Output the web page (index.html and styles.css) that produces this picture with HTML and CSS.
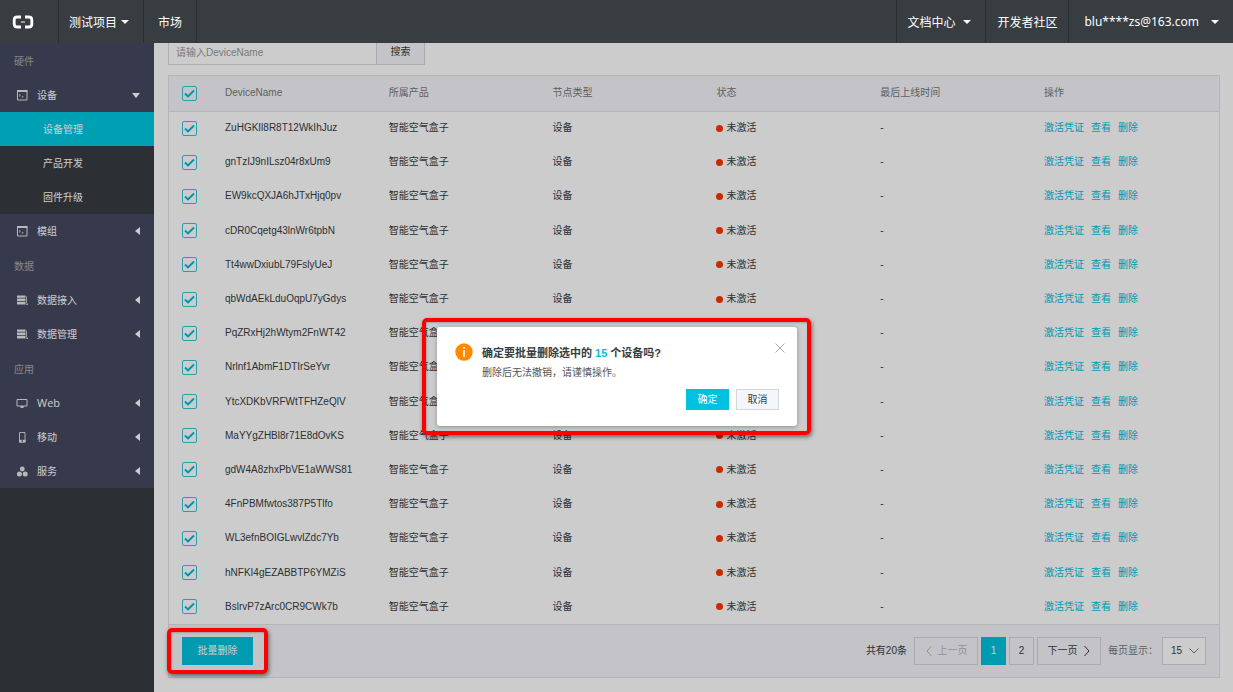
FILE: index.html
```html
<!DOCTYPE html>
<html lang="zh-CN">
<head>
    <meta charset="UTF-8">
    <meta name="viewport" content="width=device-width, initial-scale=1.0">
    <title>设备管理</title>
    <link rel="stylesheet" href="styles.css">
</head>
<body>
    <!-- shared icons -->
    <svg class="sprite" aria-hidden="true">
        <symbol id="icon-window" viewBox="0 0 12 12"><path d="M1.500 1.500h9.500v9.500H1.500z" fill="none" stroke="currentColor"/><path d="M1 1h10.500v2H1z" fill="currentColor"/><path d="M3 5l1.500 1.200L3 7.400M5.500 7.800h2" fill="none" stroke="currentColor" stroke-width=".8"/></symbol>
        <symbol id="icon-data" viewBox="0 0 12 12"><path d="M1 1.500h8.500v2.300H1zM1 4.600h8.500v2.300H1zM1 7.700h8.500v2.800H1zM10 2.500h.8V9H10zM10.300 9.500h1.500V11h-1.500z" fill="currentColor"/></symbol>
        <symbol id="icon-web" viewBox="0 0 12 12"><path d="M1 2.500h10v6.500H1z" fill="none" stroke="currentColor"/><path d="M4.500 9h3v2h-3z" fill="currentColor"/></symbol>
        <symbol id="icon-phone" viewBox="0 0 12 12"><path d="M3.500 1.500h5.500v9.500H3.500z" fill="none" stroke="currentColor" stroke-width=".9"/><path d="M3 8.800h6.500v2.700H3z" fill="currentColor"/><circle cx="6.200" cy="10" r=".8" fill="#353a49"/></symbol>
        <symbol id="icon-service" viewBox="0 0 12 12"><g fill="currentColor"><circle cx="6.300" cy="4" r="2.400"/><circle cx="3.400" cy="9" r="2.500"/><circle cx="9.200" cy="9" r="2.500"/></g></symbol>
    </svg>

    <header class="topbar">
        <a class="logo" href="#" aria-label="首页">
            <svg width="22" height="14" viewBox="0 0 22 14" fill="none" stroke="#fff"><path d="M9 2H5.500Q2.200 2 2.200 4.800v4.400Q2.200 12 5.500 12H9M13 2h3.500q3.300 0 3.300 2.800v4.400q0 2.800-3.300 2.800H13" stroke-width="2.800"/><path d="M9 7h4" stroke-width="1"/></svg>
        </a>
        <a class="nav-item" href="#">测试项目<span class="caret"></span></a>
        <a class="nav-item" href="#">市场</a>
        <div class="topbar-right">
            <a class="nav-item" href="#">文档中心<span class="caret caret-wide"></span></a>
            <a class="nav-item" href="#">开发者社区</a>
            <a class="nav-item nav-user" href="#">blu****zs@163.com<span class="caret caret-user"></span></a>
        </div>
    </header>

    <div class="layout">
        <nav class="sidebar">
            <div class="menu">
                <div class="menu-title">硬件</div>
                <a class="menu-item" href="#"><svg class="icon"><use href="#icon-window"/></svg>设备<span class="arrow arrow-down"></span></a>
                <div class="submenu">
                    <a class="submenu-item active" href="#">设备管理</a>
                    <a class="submenu-item" href="#">产品开发</a>
                    <a class="submenu-item" href="#">固件升级</a>
                </div>
                <a class="menu-item" href="#"><svg class="icon"><use href="#icon-window"/></svg>模组<span class="arrow"></span></a>
                <div class="menu-title">数据</div>
                <a class="menu-item" href="#"><svg class="icon"><use href="#icon-data"/></svg>数据接入<span class="arrow"></span></a>
                <a class="menu-item" href="#"><svg class="icon"><use href="#icon-data"/></svg>数据管理<span class="arrow"></span></a>
                <div class="menu-title">应用</div>
                <a class="menu-item" href="#"><svg class="icon"><use href="#icon-web"/></svg><span class="latin">Web</span><span class="arrow"></span></a>
                <a class="menu-item" href="#"><svg class="icon"><use href="#icon-phone"/></svg>移动<span class="arrow"></span></a>
                <a class="menu-item" href="#"><svg class="icon"><use href="#icon-service"/></svg>服务<span class="arrow"></span></a>
            </div>
        </nav>

        <main class="content">
            <form class="search">
                <input class="search-input" type="text" placeholder="请输入DeviceName" aria-label="DeviceName">
                <button class="search-btn" type="button">搜索</button>
            </form>

            <div class="panel">
                <table class="devices">
                    <thead>
                        <tr><th class="col-check"><input type="checkbox" aria-label="全选" checked></th><th>DeviceName</th><th>所属产品</th><th>节点类型</th><th>状态</th><th>最后上线时间</th><th class="col-action">操作</th></tr>
                    </thead>
                    <tbody>
                        <tr><td><input type="checkbox" aria-label="ZuHGKIl8R8T12WkIhJuz" checked></td><td>ZuHGKIl8R8T12WkIhJuz</td><td>智能空气盒子</td><td>设备</td><td><span class="status">未激活</span></td><td>-</td><td><div class="actions"><a href="#">激活凭证</a><a href="#">查看</a><a href="#">删除</a></div></td></tr>
                        <tr><td><input type="checkbox" aria-label="gnTzIJ9nILsz04r8xUm9" checked></td><td>gnTzIJ9nILsz04r8xUm9</td><td>智能空气盒子</td><td>设备</td><td><span class="status">未激活</span></td><td>-</td><td><div class="actions"><a href="#">激活凭证</a><a href="#">查看</a><a href="#">删除</a></div></td></tr>
                        <tr><td><input type="checkbox" aria-label="EW9kcQXJA6hJTxHjq0pv" checked></td><td>EW9kcQXJA6hJTxHjq0pv</td><td>智能空气盒子</td><td>设备</td><td><span class="status">未激活</span></td><td>-</td><td><div class="actions"><a href="#">激活凭证</a><a href="#">查看</a><a href="#">删除</a></div></td></tr>
                        <tr><td><input type="checkbox" aria-label="cDR0Cqetg43lnWr6tpbN" checked></td><td>cDR0Cqetg43lnWr6tpbN</td><td>智能空气盒子</td><td>设备</td><td><span class="status">未激活</span></td><td>-</td><td><div class="actions"><a href="#">激活凭证</a><a href="#">查看</a><a href="#">删除</a></div></td></tr>
                        <tr><td><input type="checkbox" aria-label="Tt4wwDxiubL79FslyUeJ" checked></td><td>Tt4wwDxiubL79FslyUeJ</td><td>智能空气盒子</td><td>设备</td><td><span class="status">未激活</span></td><td>-</td><td><div class="actions"><a href="#">激活凭证</a><a href="#">查看</a><a href="#">删除</a></div></td></tr>
                        <tr><td><input type="checkbox" aria-label="qbWdAEkLduOqpU7yGdys" checked></td><td>qbWdAEkLduOqpU7yGdys</td><td>智能空气盒子</td><td>设备</td><td><span class="status">未激活</span></td><td>-</td><td><div class="actions"><a href="#">激活凭证</a><a href="#">查看</a><a href="#">删除</a></div></td></tr>
                        <tr><td><input type="checkbox" aria-label="PqZRxHj2hWtym2FnWT42" checked></td><td>PqZRxHj2hWtym2FnWT42</td><td>智能空气盒子</td><td>设备</td><td><span class="status">未激活</span></td><td>-</td><td><div class="actions"><a href="#">激活凭证</a><a href="#">查看</a><a href="#">删除</a></div></td></tr>
                        <tr><td><input type="checkbox" aria-label="Nrlnf1AbmF1DTIrSeYvr" checked></td><td>Nrlnf1AbmF1DTIrSeYvr</td><td>智能空气盒子</td><td>设备</td><td><span class="status">未激活</span></td><td>-</td><td><div class="actions"><a href="#">激活凭证</a><a href="#">查看</a><a href="#">删除</a></div></td></tr>
                        <tr><td><input type="checkbox" aria-label="YtcXDKbVRFWtTFHZeQlV" checked></td><td>YtcXDKbVRFWtTFHZeQlV</td><td>智能空气盒子</td><td>设备</td><td><span class="status">未激活</span></td><td>-</td><td><div class="actions"><a href="#">激活凭证</a><a href="#">查看</a><a href="#">删除</a></div></td></tr>
                        <tr><td><input type="checkbox" aria-label="MaYYgZHBl8r71E8dOvKS" checked></td><td>MaYYgZHBl8r71E8dOvKS</td><td>智能空气盒子</td><td>设备</td><td><span class="status">未激活</span></td><td>-</td><td><div class="actions"><a href="#">激活凭证</a><a href="#">查看</a><a href="#">删除</a></div></td></tr>
                        <tr><td><input type="checkbox" aria-label="gdW4A8zhxPbVE1aWWS81" checked></td><td>gdW4A8zhxPbVE1aWWS81</td><td>智能空气盒子</td><td>设备</td><td><span class="status">未激活</span></td><td>-</td><td><div class="actions"><a href="#">激活凭证</a><a href="#">查看</a><a href="#">删除</a></div></td></tr>
                        <tr><td><input type="checkbox" aria-label="4FnPBMfwtos387P5Tlfo" checked></td><td>4FnPBMfwtos387P5Tlfo</td><td>智能空气盒子</td><td>设备</td><td><span class="status">未激活</span></td><td>-</td><td><div class="actions"><a href="#">激活凭证</a><a href="#">查看</a><a href="#">删除</a></div></td></tr>
                        <tr><td><input type="checkbox" aria-label="WL3efnBOIGLwvlZdc7Yb" checked></td><td>WL3efnBOIGLwvlZdc7Yb</td><td>智能空气盒子</td><td>设备</td><td><span class="status">未激活</span></td><td>-</td><td><div class="actions"><a href="#">激活凭证</a><a href="#">查看</a><a href="#">删除</a></div></td></tr>
                        <tr><td><input type="checkbox" aria-label="hNFKI4gEZABBTP6YMZiS" checked></td><td>hNFKI4gEZABBTP6YMZiS</td><td>智能空气盒子</td><td>设备</td><td><span class="status">未激活</span></td><td>-</td><td><div class="actions"><a href="#">激活凭证</a><a href="#">查看</a><a href="#">删除</a></div></td></tr>
                        <tr><td><input type="checkbox" aria-label="BslrvP7zArc0CR9CWk7b" checked></td><td>BslrvP7zArc0CR9CWk7b</td><td>智能空气盒子</td><td>设备</td><td><span class="status">未激活</span></td><td>-</td><td><div class="actions"><a href="#">激活凭证</a><a href="#">查看</a><a href="#">删除</a></div></td></tr>
                    </tbody>
                </table>

                <div class="panel-footer">
                    <button class="batch-btn" type="button">批量删除</button>
                    <div class="pager">
                        <span class="total">共有20条</span>
                        <button class="page-btn page-step" type="button" disabled><svg width="8" height="12" viewBox="0 0 8 12"><path d="M6.500 1L2 6l4.500 5" fill="none" stroke="currentColor"/></svg>上一页</button>
                        <button class="page-btn current" type="button">1</button>
                        <button class="page-btn" type="button">2</button>
                        <button class="page-btn page-step" type="button">下一页<svg width="8" height="12" viewBox="0 0 8 12"><path d="M1.500 1L6 6l-4.500 5" fill="none" stroke="currentColor"/></svg></button>
                        <label class="size-label" for="pageSize">每页显示：</label>
                        <select class="page-size" id="pageSize"><option>15</option></select>
                    </div>
                </div>
            </div>
        </main>
    </div>

    <div class="mask">
        <div class="mark mark-dialog">
            <div class="dialog" role="dialog" aria-labelledby="dialogTitle">
                <svg class="dialog-icon" width="18" height="18" viewBox="0 0 18 18"><circle cx="9" cy="9" r="8.700" fill="#ff8a00"/><path d="M8.200 4h1.600v1.700H8.200zM8.200 7h1.600v7H8.200z" fill="#fff"/></svg>
                <div class="dialog-body">
                    <h3 id="dialogTitle">确定要批量删除选中的 <em>15</em> 个设备吗?</h3>
                    <p>删除后无法撤销，请谨慎操作。</p>
                    <div class="dialog-actions">
                        <button class="btn btn-primary" type="button">确定</button>
                        <button class="btn" type="button">取消</button>
                    </div>
                </div>
                <button class="dialog-close" type="button" aria-label="关闭"><svg width="10" height="10" viewBox="0 0 10 10"><path d="M.5.5l9 9M9.500.5l-9 9" stroke="#aaa" fill="none"/></svg></button>
            </div>
        </div>
        <div class="mark mark-batch"></div>
    </div>
</body>
</html>
```

FILE: styles.css
```css
* {
    box-sizing: border-box;
}
body {
    margin: 0;
    min-height: 100vh;
    display: flex;
    flex-direction: column;
    position: relative;
    font-family: "Liberation Sans", "Noto Sans CJK SC", sans-serif;
    font-size: 10px;
    line-height: 16px;
    color: #373d41;
    background: #fff;
}
a {
    color: #00c1de;
    text-decoration: none;
}
button, input, select {
    font: inherit;
    color: inherit;
    margin: 0;
    padding: 0;
}
.sprite {
    position: absolute;
    width: 0;
    height: 0;
}

/* top bar */
.topbar {
    display: flex;
    height: 43px;
    background: #373d41;
    position: relative;
    z-index: 2;
    font-family: "Noto Sans CJK SC", sans-serif;
    font-size: 12px;
}
.logo {
    display: flex;
    align-items: center;
    width: 58px;
    padding-left: 12px;
}
.nav-item {
    display: flex;
    align-items: center;
    padding: 0 14px 0 10px;
    border-left: 1px solid #2a2f32;
    color: #fff;
}
.nav-item + .nav-item {
    padding: 0 14px;
}
.topbar > .nav-item:nth-child(3) {
    border-right: 1px solid #2a2f32;
}
.topbar-right {
    display: flex;
    margin-left: auto;
}
.topbar-right .nav-item + .nav-item {
    padding: 0 11px;
}
.topbar-right .nav-item + .nav-user {
    padding: 0 14px 0 15px;
    font-family: "Noto Sans", sans-serif;
}
.caret {
    margin-left: 4px;
    border: 4px solid transparent;
    border-top-color: #fff;
    border-bottom: 0;
}
.caret-wide {
    margin-left: 8px;
}
.caret-user {
    margin-left: 12px;
}

/* left menu */
.layout {
    display: flex;
    flex: 1;
}
.sidebar {
    width: 154px;
    flex-shrink: 0;
    background: #373d41;
    font-family: "Noto Sans CJK SC", sans-serif;
}
.menu {
    background: #454960;
}
.menu-title {
    padding-left: 14px;
    line-height: 35px;
    color: #aaa;
}
.menu-item {
    display: flex;
    align-items: center;
    height: 34px;
    padding: 0 14px 0 16px;
    color: #fff;
}
.icon {
    width: 12px;
    height: 12px;
    margin-right: 9px;
    color: #e6e6e6;
}
.latin {
    font-family: "Open Sans", sans-serif;
    font-size: 11px;
}
.arrow {
    margin-left: auto;
    border: 4px solid transparent;
    border-right: 5px solid #fff;
    border-left: 0;
}
.arrow-down {
    border: 4px solid transparent;
    border-top: 5px solid #fff;
    border-bottom: 0;
}
.submenu {
    background: #373d41;
}
.submenu-item {
    display: block;
    padding-left: 43px;
    line-height: 34px;
    color: #fff;
}
.submenu-item.active {
    background: #00c8e2;
}

/* content */
.content {
    flex: 1;
    min-width: 0;
    display: flex;
    flex-direction: column;
    padding: 0 13px 14px 14px;
}
.search {
    display: flex;
    margin-top: -5px;
}
.search-input {
    width: 208px;
    height: 27px;
    padding: 2px 7px 0;
    border: 1px solid #ddd;
    border-right: 0;
    background: #fff;
}
.search-input::placeholder {
    color: #999;
}
.search-btn {
    width: 49px;
    border: 1px solid #d5d5da;
    background: #f5f6fa;
}
.panel {
    flex: 1;
    display: flex;
    flex-direction: column;
    margin-top: 10px;
    border: 1px solid #e1e2e8;
}
.devices {
    flex: 1;
    width: 100%;
    table-layout: fixed;
    border-collapse: collapse;
}
.devices th,
.devices td {
    padding: 0 0 0 13px;
    text-align: left;
    font-weight: normal;
}
.devices th {
    width: 15.6%;
    height: 35px;
    background: #f5f6fa;
    border-bottom: 1px solid #e1e2e8;
    color: #777;
}
.devices th.col-check {
    width: 43px;
}
.devices th.col-action {
    width: auto;
}
.devices td {
    height: 34px;
}
input[type="checkbox"] {
    appearance: none;
    display: block;
    width: 15px;
    height: 15px;
    border: 1px solid #35c5da;
    border-radius: 2px;
}
input[type="checkbox"]:checked {
    background: url("data:image/svg+xml,%3Csvg xmlns='http://www.w3.org/2000/svg' viewBox='0 0 13 13'%3E%3Cpath d='M2 6.500l3 3 6-6' fill='none' stroke='%2300b9d6' stroke-width='1.900'/%3E%3C/svg%3E") center / 13px 13px no-repeat;
}
.status {
    display: flex;
    align-items: center;
    gap: 3px;
}
.status::before {
    content: "";
    width: 7px;
    height: 7px;
    border-radius: 50%;
    background: #ff3300;
}
.actions {
    display: flex;
    gap: 7px;
}

/* footer with pager */
.panel-footer {
    display: flex;
    align-items: center;
    justify-content: space-between;
    height: 53px;
    padding: 0 13px;
    background: #f5f6fa;
    border-top: 1px solid #e1e2e8;
}
.batch-btn {
    width: 71px;
    height: 28px;
    border: 0;
    background: #00c1de;
    color: #fff;
}
.pager {
    display: flex;
    align-items: center;
    gap: 3px;
}
.total {
    margin-right: 4px;
}
.page-btn {
    display: flex;
    align-items: center;
    justify-content: center;
    gap: 5px;
    width: 25px;
    height: 28px;
    border: 1px solid #d5d6dc;
    background: transparent;
}
.page-step {
    width: 64px;
}
.page-btn.current {
    background: #00c1de;
    border-color: #00c1de;
    color: #fff;
}
.page-btn:disabled {
    color: #b5b5b8;
}
.size-label {
    margin: 0 1px 0 4px;
    color: #777;
}
.page-size {
    appearance: none;
    width: 44px;
    height: 28px;
    padding-left: 8px;
    border: 1px solid #d5d6dc;
    border-radius: 0;
    background: #fff url("data:image/svg+xml,%3Csvg xmlns='http://www.w3.org/2000/svg' viewBox='0 0 10 6'%3E%3Cpath d='M.5.500l4.500 4.500L9.500.500' fill='none' stroke='%23777'/%3E%3C/svg%3E") right 6px center / 10px 6px no-repeat;
}

/* confirm dialog */
.mask {
    position: absolute;
    top: 43px;
    right: 0;
    bottom: 0;
    left: 0;
    z-index: 1;
    padding-top: 275px;
    background: rgba(0, 0, 0, 0.2);
}
.mark {
    border: 4px solid #ff0000;
    border-radius: 5px;
    box-shadow: 1px 2px 4px rgba(0, 0, 0, 0.5), inset 1px 1px 2px rgba(0, 0, 0, 0.2);
}
.mark-dialog {
    width: fit-content;
    margin: 0 auto;
    padding: 5px 10px 5px 11px;
}
.mark-batch {
    position: absolute;
    left: 167px;
    bottom: 18px;
    width: 101px;
    height: 46px;
}
.dialog {
    display: flex;
    align-items: flex-start;
    width: 360px;
    padding: 16px 12px 16px 18px;
    border-radius: 3px;
    background: #fff;
    box-shadow: 0 1px 4px rgba(0, 0, 0, 0.3);
}
.dialog-icon {
    margin-right: 9px;
}
.dialog-body {
    flex: 1;
    padding-right: 6px;
}
.dialog h3 {
    margin: 0;
    font-size: 11px;
    line-height: 20px;
}
.dialog h3 em {
    font-style: normal;
    color: #00c1de;
}
.dialog p {
    margin: 2px 0 0;
    color: #555;
}
.dialog-actions {
    display: flex;
    justify-content: flex-end;
    gap: 7px;
    margin-top: 8px;
}
.btn {
    width: 43px;
    height: 21px;
    border: 1px solid #d5d6dc;
    background: #f5f6fa;
}
.btn-primary {
    border-color: #00c1de;
    background: #00c1de;
    color: #fff;
}
.dialog-close {
    display: flex;
    width: 10px;
    margin-left: -10px;
    border: 0;
    background: none;
}
```
